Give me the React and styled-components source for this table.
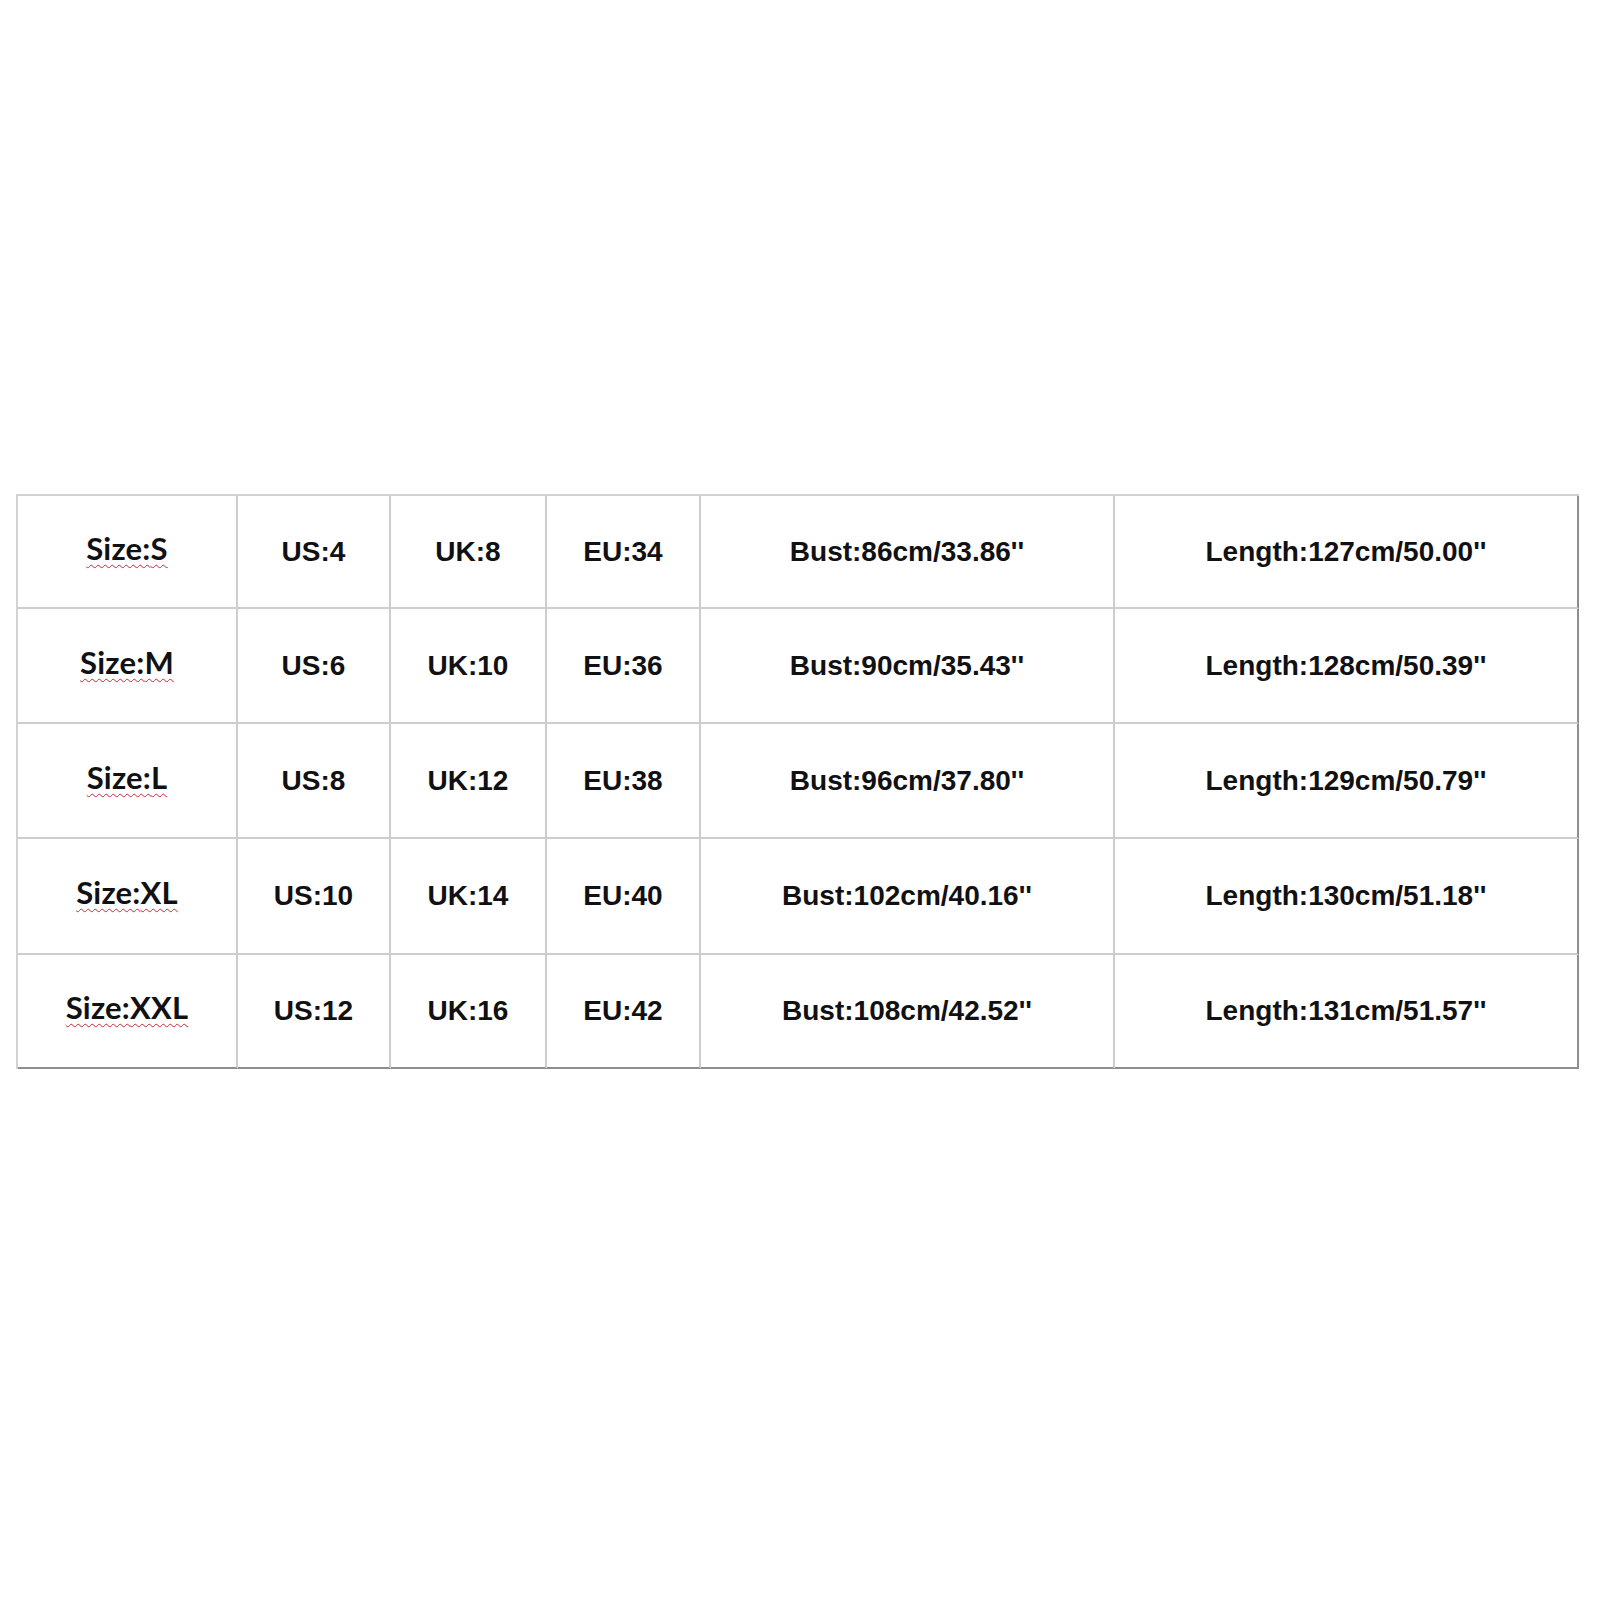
import React from "react";
import styled, { createGlobalStyle } from "styled-components";

const Global = createGlobalStyle`
  html, body { margin: 0; padding: 0; background: #ffffff; }
  body { width: 1600px; height: 1600px; }
`;

const Page = styled.div`
  width: 1600px;
  height: 1600px;
  box-sizing: border-box;
  padding: 494px 0 0 16px;
  background: #ffffff;
`;

const Grid = styled.div`
  display: grid;
  width: max-content;
  grid-template-columns: 220px 153px 156px 154px 414px 464px;
  grid-template-rows: 113px 115px 115px 116px 114px;
  border-top: 2px solid #d2d2d2;
  border-left: 2px solid #d2d2d2;
`;

const Cell = styled.div`
  box-sizing: border-box;
  display: flex;
  align-items: center;
  justify-content: center;
  border-right: 2px solid ${(p) => (p.$lastCol ? "#8e8e8e" : "#cdcdcd")};
  border-bottom: 2px solid ${(p) => (p.$lastRow ? "#8e8e8e" : "#cdcdcd")};
  font-family: "Liberation Sans", Arial, sans-serif;
  font-weight: 700;
  font-size: 28px;
  line-height: 1;
  color: #111114;
  white-space: nowrap;
`;

const SizeLabel = styled.span`
  display: inline-block;
  padding-bottom: 7px;
  font-family: Lato, "Liberation Sans", sans-serif;
  font-weight: 700;
  font-size: 31px;
  line-height: 1;
  letter-spacing: 0.2px;
  color: #111114;
  text-decoration: underline wavy #c42a3a;
  text-decoration-thickness: 1.4px;
  text-underline-offset: 4px;
`;

const rows = [
  ["S", "US:4", "UK:8", "EU:34", "Bust:86cm/33.86''", "Length:127cm/50.00''"],
  ["M", "US:6", "UK:10", "EU:36", "Bust:90cm/35.43''", "Length:128cm/50.39''"],
  ["L", "US:8", "UK:12", "EU:38", "Bust:96cm/37.80''", "Length:129cm/50.79''"],
  ["XL", "US:10", "UK:14", "EU:40", "Bust:102cm/40.16''", "Length:130cm/51.18''"],
  ["XXL", "US:12", "UK:16", "EU:42", "Bust:108cm/42.52''", "Length:131cm/51.57''"],
];

export default function App() {
  return (
    <>
      <Global />
      <Page>
        <Grid>
          {rows.map((r, ri) =>
            r.map((v, ci) => (
              <Cell
                key={`${ri}-${ci}`}
                $lastCol={ci === r.length - 1}
                $lastRow={ri === rows.length - 1}
              >
                {ci === 0 ? <SizeLabel>Size:{v}</SizeLabel> : v}
              </Cell>
            ))
          )}
        </Grid>
      </Page>
    </>
  );
}
